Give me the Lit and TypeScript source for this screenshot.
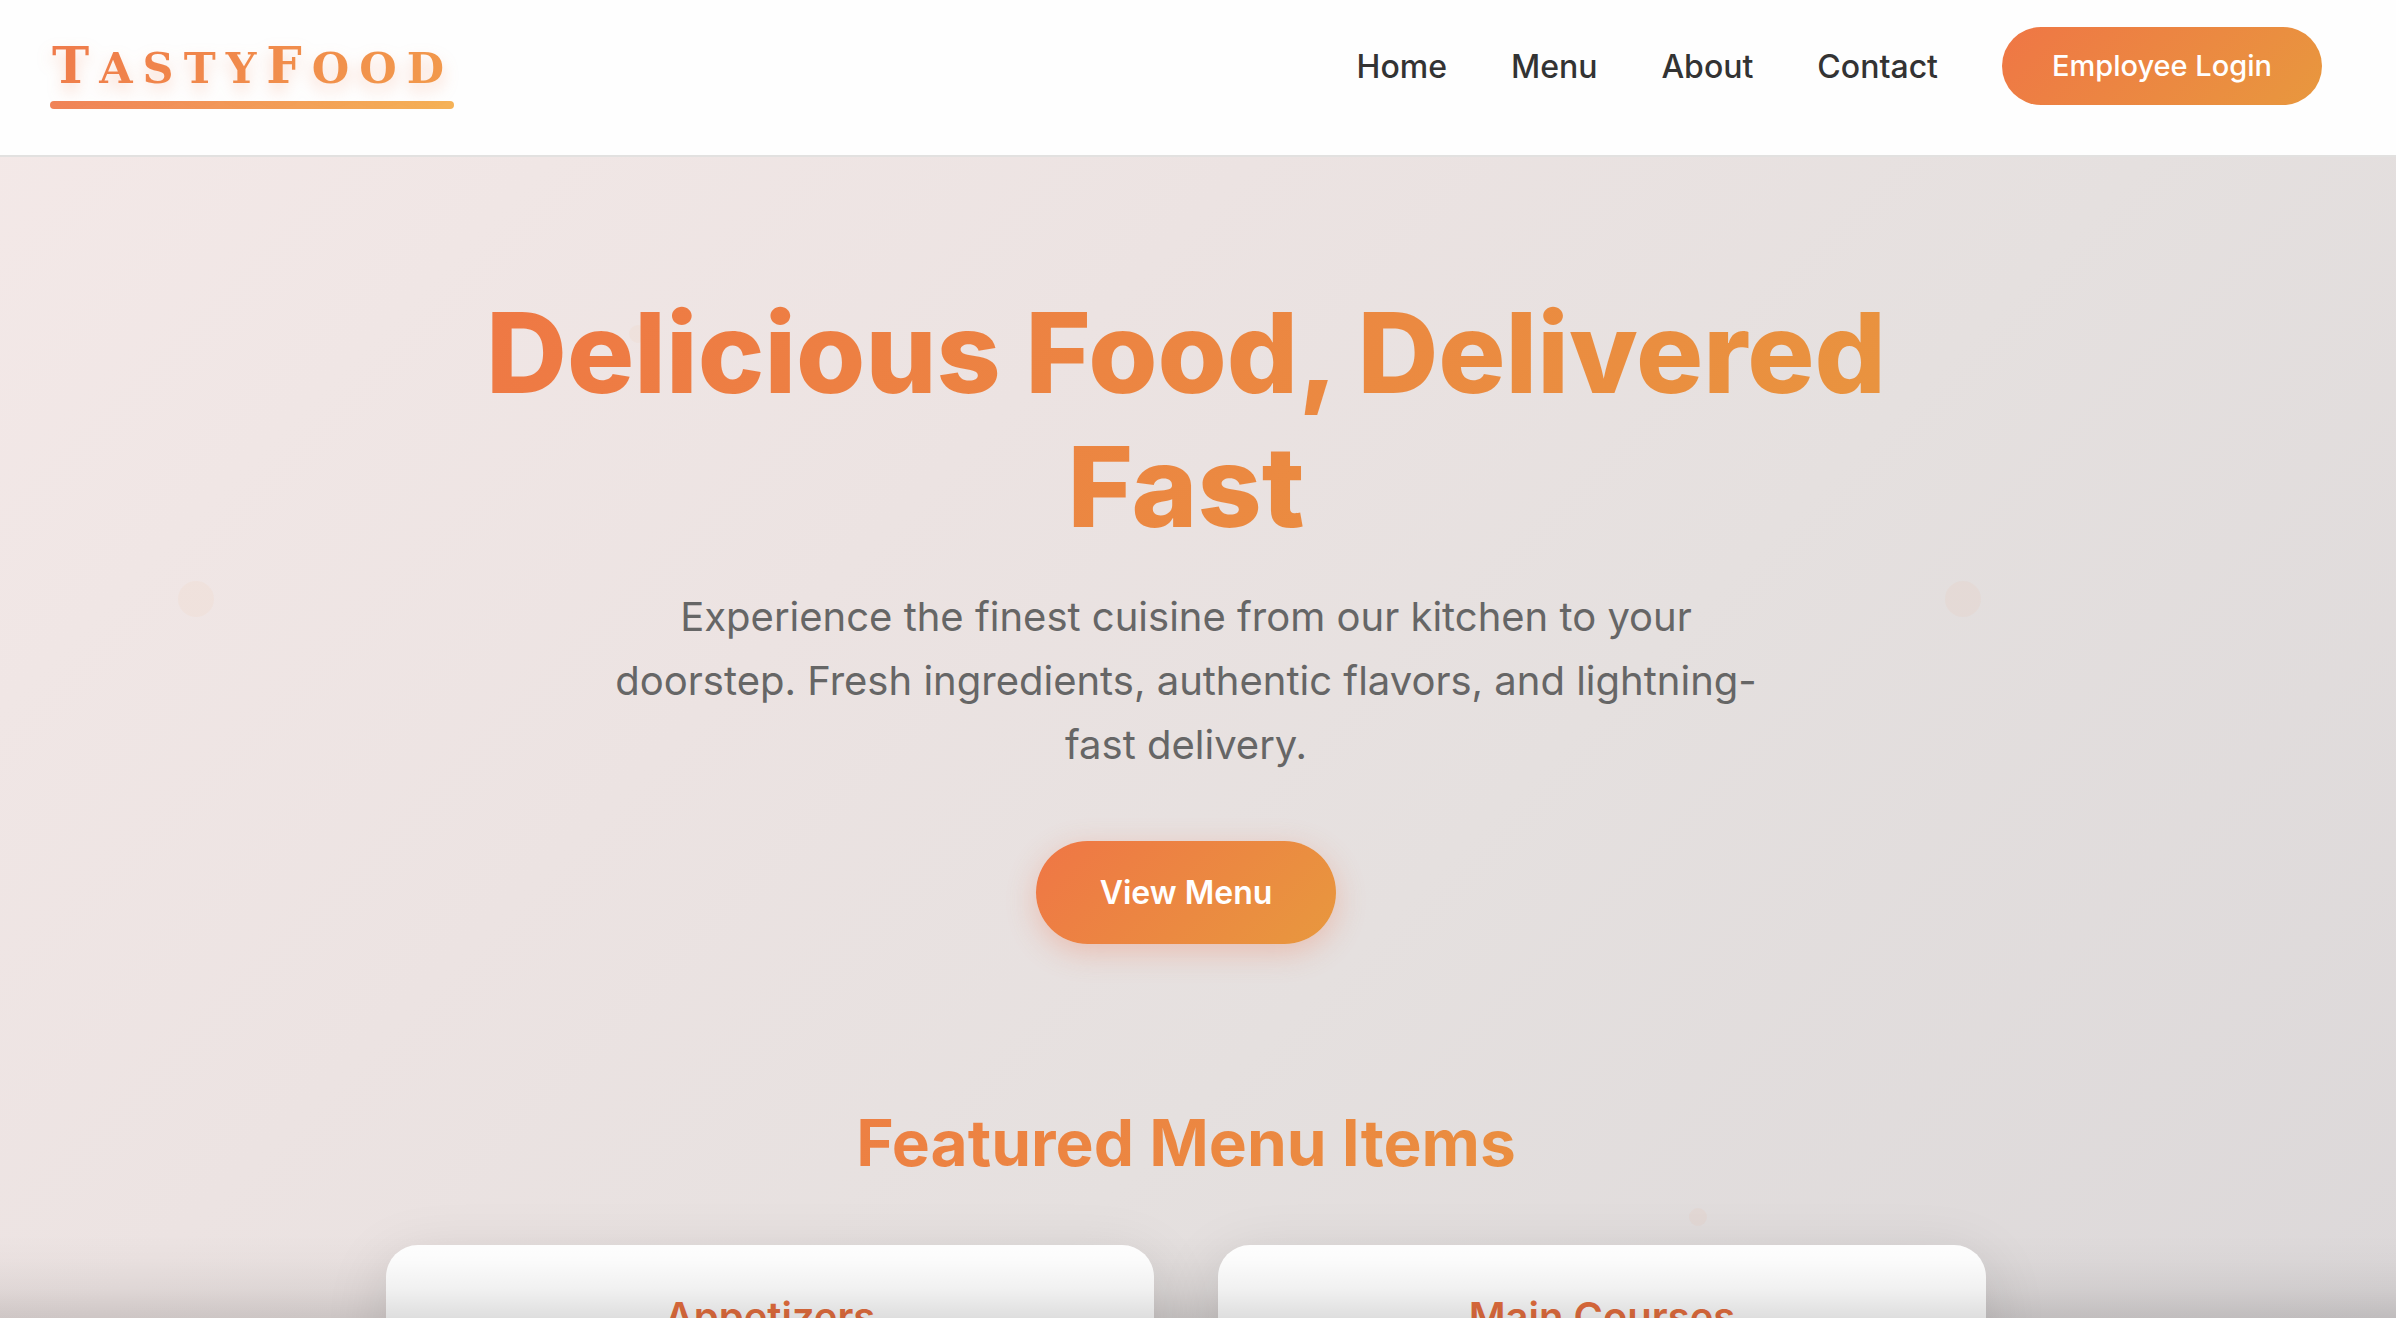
import { LitElement, html, css } from "lit";
import { customElement } from "lit/decorators.js";

const links = ["Home", "Menu", "About", "Contact"];
const categories = ["Appetizers", "Main Courses"];

@customElement("app-root")
export class AppRoot extends LitElement {
  static styles = css`
    :host {
      --brand: linear-gradient(135deg, #ef7645, #e8983e);
      display: block;
      position: relative;
      box-sizing: border-box;
      height: 100vh;
      overflow: hidden;
      font-family: Inter, "Liberation Sans", sans-serif;
      color: #333;
      background: linear-gradient(135deg, #f4e9e8 0%, #ece3e2 38%, #e5e0df 62%, #dcd8d9 100%);
    }
    * {
      box-sizing: border-box;
    }
    .header {
      display: flex;
      align-items: flex-start;
      justify-content: space-between;
      position: relative;
      min-height: 157px;
      padding: 27px 74px 40px 50px;
      background: #fefefe;
      border-bottom: 2px solid #e2e1e0;
    }
    .logo {
      display: flex;
      flex-direction: column;
      gap: 8px;
      padding-top: 16px;
      text-decoration: none;
    }
    .wordmark {
      display: block;
      padding-left: 2px;
      font: 700 43px/50px "DejaVu Serif", serif;
      letter-spacing: 10px;
      text-transform: uppercase;
      color: transparent;
      background: linear-gradient(135deg, #ef7b4b, #f29b4c);
      background-clip: text;
      -webkit-background-clip: text;
      filter: drop-shadow(0 8px 8px rgba(240, 110, 60, 0.25));
    }
    .initial {
      font-size: 50px;
      line-height: 40px;
    }
    .rule {
      height: 8px;
      border-radius: 4px;
      background: linear-gradient(90deg, #f08358, #f5b257);
    }
    .nav {
      display: flex;
      align-items: center;
      gap: 64px;
    }
    .link {
      padding-top: 2px;
      font-size: 32px;
      line-height: 40px;
      font-weight: 500;
      color: #333;
      text-decoration: none;
    }
    .login,
    .cta {
      border: 0;
      font-family: inherit;
      color: #fff;
      background: var(--brand);
      border-radius: 52px;
    }
    .login {
      padding: 22px 50px;
      font-size: 29px;
      line-height: 34px;
      font-weight: 500;
    }
    .cta {
      margin-top: 64px;
      padding: 32px 64px;
      font-size: 32px;
      line-height: 39px;
      font-weight: 600;
      box-shadow: 0 8px 30px rgba(240, 110, 70, 0.3);
    }
    .page {
      padding-right: 24px;
    }
    .main {
      position: relative;
      max-width: 1600px;
      margin: 0 auto;
      padding-top: 128px;
    }
    .hero {
      display: flex;
      flex-direction: column;
      align-items: center;
      text-align: center;
    }
    .title,
    .subtitle {
      margin: 0;
      text-align: center;
      color: transparent;
      background: var(--brand);
      background-clip: text;
      -webkit-background-clip: text;
    }
    .title {
      font-size: 112px;
      line-height: 134px;
      font-weight: 800;
    }
    .lead {
      max-width: 1200px;
      margin: 32px 0 0;
      font-size: 40px;
      line-height: 64px;
      color: #666;
    }
    .subtitle {
      margin-top: 160px;
      font-size: 64px;
      line-height: 77px;
      font-weight: 700;
    }
    .cards {
      display: grid;
      grid-template-columns: 1fr 1fr;
      gap: 64px;
      margin-top: 64px;
    }
    .card {
      min-height: 400px;
      padding: 48px;
      border-radius: 32px;
      background: #fff;
      box-shadow: 0 16px 64px rgba(0, 0, 0, 0.12);
      text-align: center;
    }
    .category {
      margin: 0;
      font-size: 40px;
      line-height: 48px;
      font-weight: 600;
      color: #e8703f;
    }
    .dot {
      position: absolute;
      width: 36px;
      height: 36px;
      border-radius: 50%;
      background: #f0a884;
      opacity: 0.08;
      transform: translate(-50%, -50%);
    }
    .small {
      width: 18px;
      height: 18px;
    }
    .peach {
      background: #f3c49c;
      opacity: 0.1;
    }
    .d1 {
      left: 196px;
      top: 599px;
    }
    .d2 {
      left: 1963px;
      top: 599px;
    }
    .d3 {
      left: 1698px;
      top: 1217px;
    }
    .d4 {
      left: 638px;
      top: 334px;
    }
    .shade {
      position: absolute;
      inset: auto 0 0 0;
      height: 84px;
      pointer-events: none;
      background: linear-gradient(
        rgba(0, 0, 0, 0),
        rgba(0, 0, 0, 0.015) 30%,
        rgba(0, 0, 0, 0.055) 65%,
        rgba(0, 0, 0, 0.13)
      );
    }
  `;

  render() {
    return html`
      <span class="dot peach d1"></span>
      <span class="dot d2"></span>
      <span class="dot small d3"></span>
      <span class="dot small peach d4"></span>
      <header class="header">
        <a class="logo" href="#home">
          <span class="wordmark"
            ><span class="initial">T</span>asty<span class="initial">F</span>ood</span
          >
          <span class="rule"></span>
        </a>
        <nav class="nav">
          ${links.map(
            (name) => html`<a class="link" href="#${name.toLowerCase()}">${name}</a>`
          )}
          <button class="login" type="button">Employee Login</button>
        </nav>
      </header>
      <div class="page">
        <main class="main">
          <section class="hero">
            <h1 class="title">Delicious Food, Delivered Fast</h1>
            <p class="lead">
              Experience the finest cuisine from our kitchen to your doorstep. Fresh
              ingredients, authentic flavors, and lightning-fast delivery.
            </p>
            <button class="cta" type="button">View Menu</button>
          </section>
          <section>
            <h2 class="subtitle">Featured Menu Items</h2>
            <div class="cards">
              ${categories.map(
                (name) => html`<article class="card"><h3 class="category">${name}</h3></article>`
              )}
            </div>
          </section>
        </main>
      </div>
      <div class="shade"></div>
    `;
  }
}
